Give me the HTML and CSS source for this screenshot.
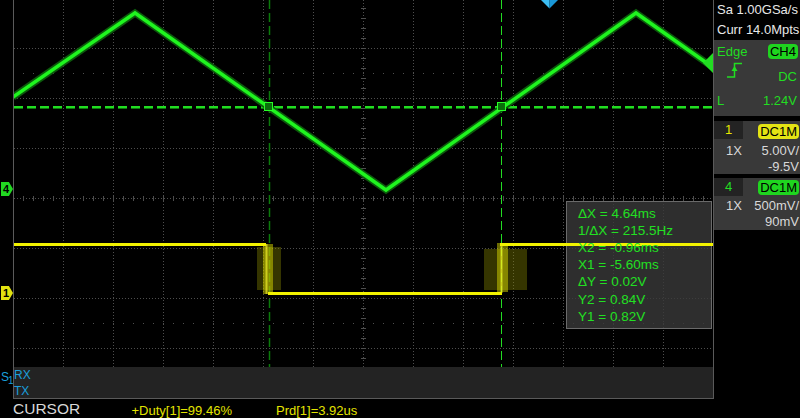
FILE: index.html
```html
<!DOCTYPE html>
<html>
<head>
<meta charset="utf-8">
<title>Scope</title>
<link rel="stylesheet" href="styles.css">
</head>
<body>
<div class="scope">
  <div class="main">
    <div class="gutter">
      <div class="chmark ch4m">4</div>
      <div class="chmark ch1m">1</div>
      <div class="s1"><span>S</span><span class="sub">1</span></div>
    </div>
    <div class="screen">
      <div class="plot">
        <svg width="699" height="367" viewBox="14 0 699 367">
          <g stroke="#4e4e4e" stroke-width="1" stroke-dasharray="1 2" fill="none">
            <path d="M63.5 0V367M113.5 0V367M163.5 0V367M213.5 0V367M263.5 0V367M313.5 0V367M363.5 0V367M413.5 0V367M463.5 0V367M513.5 0V367M563.5 0V367M613.5 0V367M663.5 0V367"/>
            <path d="M14 48.5H713M14 98.5H713M14 148.5H713M14 198.5H713M14 248.5H713M14 298.5H713M14 348.5H713"/>
          </g>
          <path d="M13 198.5H713" stroke="#4e4e4e" stroke-width="5" stroke-dasharray="1 9"/>
          <path d="M363.5 -2V367" stroke="#4e4e4e" stroke-width="5" stroke-dasharray="1 9"/>
          <path d="M13 73.5H713M13 323.5H713" stroke="#4e4e4e" stroke-width="1" stroke-dasharray="1 9"/>

          <rect x="566.5" y="201.5" width="145" height="127" fill="rgba(58,58,58,0.8)" stroke="#6a6a6a" stroke-width="1"/>

          <path d="M269.5 0V367" stroke="#0b7a0b" stroke-width="1.5" stroke-dasharray="9 4"/>
          <path d="M501.5 0V367" stroke="#22dd22" stroke-width="1" stroke-dasharray="9 4"/>
          <path d="M14 107H713" stroke="#22dd22" stroke-width="2" stroke-dasharray="9 4"/>
          <path d="M14 108.5H713" stroke="#0b7a0b" stroke-width="1" stroke-dasharray="9 4"/>

          <g>
            <rect x="257" y="247" width="24" height="43" fill="rgba(140,140,0,0.38)"/>
            <rect x="263" y="244" width="10" height="50" fill="rgba(215,215,0,0.5)"/>
            <path d="M266.5 244V294" stroke="#ffff30" stroke-width="2" opacity="0.6"/>
            <rect x="484" y="249" width="43" height="41" fill="rgba(140,140,0,0.38)"/>
            <rect x="497" y="243" width="11" height="49" fill="rgba(215,215,0,0.5)"/>
            <path d="M501.5 243V293" stroke="#ffff30" stroke-width="2" opacity="0.6"/>
            <path d="M14 244.5H266M268 293.5H502M500 244.5H713" fill="none" stroke="#f2f200" stroke-width="3"/>
          </g>

          <polyline points="13,97 135,13 386,190 636,13 713,67.5" fill="none" stroke="#0c5a0c" stroke-width="7"/>
          <polyline points="13,97 135,13 386,190 636,13 713,67.5" fill="none" stroke="#1ff51f" stroke-width="3.5"/>

          <rect x="264.5" y="102.5" width="8" height="8" fill="#0a6e0a" stroke="#27ff27" stroke-width="1"/>
          <rect x="497.5" y="102.5" width="8" height="8" fill="#0a6e0a" stroke="#27ff27" stroke-width="1"/>

          <polygon points="713,53 713,73 703,63" fill="#22dd22"/>
          <polygon points="541,0 549.5,0 549.5,8.5" fill="#3cbdf2"/>
          <polygon points="549.5,0 558,0 549.5,8.5" fill="#1a98d8"/>
        </svg>
        <div class="readout">
          <div>ΔX = 4.64ms</div>
          <div>1/ΔX = 215.5Hz</div>
          <div>X2 = -0.96ms</div>
          <div>X1 = -5.60ms</div>
          <div>ΔY = 0.02V</div>
          <div>Y2 = 0.84V</div>
          <div>Y1 = 0.82V</div>
        </div>
      </div>
      <div class="serial">
        <div>RX</div>
        <div>TX</div>
      </div>
    </div>
    <div class="panel">
      <div class="acq">
        <div>Sa 1.00GSa/s</div>
        <div>Curr 14.0Mpts</div>
      </div>
      <div class="trig">
        <div class="trow thead"><span>Edge</span><span class="badge gbadge">CH4</span></div>
        <div class="trow tmid">
          <svg width="16" height="16" viewBox="0 0 16 16">
            <path d="M0 15H7.5V1.5H15" fill="none" stroke="#22dd22" stroke-width="1.5"/>
            <polygon points="7.5,4 4.5,9 10.5,9" fill="#22dd22"/>
          </svg>
          <span class="tval">DC</span>
        </div>
        <div class="trow tlow"><span>L</span><span class="tval">1.24V</span></div>
      </div>
      <div class="chbox ch1box">
        <div class="chhead"><span class="chnum ynum">1</span><span class="badge ybadge">DC1M</span></div>
        <div class="chrow first"><span>1X</span><span>5.00V/</span></div>
        <div class="chrow end"><span>-9.5V</span></div>
      </div>
      <div class="chbox ch4box">
        <div class="chhead"><span class="chnum gnum">4</span><span class="badge gbadge">DC1M</span></div>
        <div class="chrow first"><span>1X</span><span>500mV/</span></div>
        <div class="chrow end"><span>90mV</span></div>
      </div>
    </div>
  </div>
  <div class="status">
    <span class="mode">CURSOR</span>
    <span class="meas duty">+Duty[1]=99.46%</span>
    <span class="meas">Prd[1]=3.92us</span>
  </div>
</div>
</body>
</html>
```

FILE: styles.css
```css
* { box-sizing: border-box; margin: 0; padding: 0; }
html, body { width: 800px; height: 418px; overflow: hidden; background: #000; }
body { font-family: "Liberation Sans", Arial, sans-serif; color: #e0e0e0; }

.scope { width: 800px; height: 418px; display: flex; flex-direction: column; }
.main { display: flex; height: 399px; }

.gutter { width: 13px; position: relative; display: flex; flex-direction: column; }
.chmark {
  position: absolute; left: 1px; width: 12px; height: 14px;
  clip-path: polygon(0 0, 66% 0, 100% 50%, 66% 100%, 0 100%);
  font-size: 11px; line-height: 14px; font-weight: bold; color: #000; padding-left: 2px;
}
.ch4m { top: 182px; background: #22d822; }
.ch1m { top: 286px; background: #e2e210; }
.s1 {
  margin-top: auto; margin-bottom: 12px; padding-left: 1px;
  display: flex; align-items: flex-start;
  color: #1a9fdc; font-size: 12px; line-height: 14px;
}
.s1 .sub { margin-top: 5px; margin-left: -1px; font-size: 10px; line-height: 12px; }

.screen {
  width: 701px; height: 399px;
  border: 1px solid #5a5a5a; border-top: none;
  display: flex; flex-direction: column;
}
.plot { position: relative; height: 367px; }
.plot svg { display: block; }
.readout {
  position: absolute; left: 552px; top: 201px; width: 145px; height: 127px;
  padding: 3.5px 0 0 12px;
  font-size: 13.5px; line-height: 17.2px; color: #22e022; white-space: nowrap;
}
.serial { height: 31px; background: #232323; color: #1a9fdc; font-size: 12px; line-height: 16px; }

.panel { width: 86px; display: flex; flex-direction: column; }
.acq { height: 40px; padding-left: 3px; font-size: 13px; line-height: 20px; color: #e8e8e8; white-space: nowrap; }

.trig { height: 76px; background: #393939; padding: 3px 2px 0 3px; }
.trow {
  display: flex; justify-content: space-between; align-items: center;
  font-size: 13px; line-height: 17px; color: #22dd22;
}
.thead { height: 17px; }
.tmid { height: 24px; align-items: flex-end; }
.tmid svg { display: block; margin: 0 0 6px 10px; }
.tmid .tval { margin-bottom: -1px; }
.tlow { margin-top: 8px; }
.tval { margin-right: 1px; }

.badge {
  height: 15px; border-radius: 4px; color: #000;
  font-size: 13px; line-height: 15px; padding: 0 2px; white-space: nowrap;
}
.gbadge { background: #1fd51f; }
.ybadge { background: #e4e414; }

.chbox { background: #393939; }
.ch1box { height: 53px; margin-top: 5px; }
.ch4box { height: 52px; margin-top: 4px; }
.chhead { height: 18px; display: flex; justify-content: space-between; align-items: flex-start; }
.chnum { width: 29px; height: 18px; background: #232323; text-align: center; font-size: 13px; line-height: 18px; }
.ynum { color: #e8e800; }
.gnum { color: #22dd22; }
.ch1box .chhead .badge { margin: 3px 1px 0 0; }
.ch4box .chhead .badge { margin: 2px 1px 0 0; }
.chrow {
  display: flex; justify-content: space-between;
  padding: 0 1px 0 12px; font-size: 13px; line-height: 16px; color: #d8d8d8; white-space: nowrap;
}
.ch1box .first { margin-top: 4px; }
.ch4box .first { margin-top: 2px; }
.chrow.end { justify-content: flex-end; }

.status { display: flex; height: 19px; padding-left: 13px; white-space: nowrap; }
.mode { width: 118.5px; font-size: 15.5px; line-height: 19px; color: #d8d8d8; }
.meas { font-size: 13px; line-height: 19px; padding-top: 2px; color: #e4e400; }
.duty { width: 144.5px; }
```
